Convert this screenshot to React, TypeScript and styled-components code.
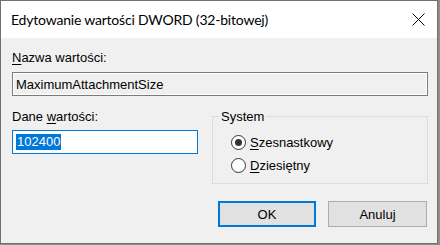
import styled, { createGlobalStyle } from "styled-components";

const GlobalStyle = createGlobalStyle`
  html, body {
    margin: 0;
    background: #8e8e8e;
  }
`;

const Window = styled.div`
  width: 438px;
  height: 244px;
  box-sizing: border-box;
  border: 1px solid #707070;
  background: #f0f0f0;
  display: flex;
  flex-direction: column;
  font-family: "Liberation Sans", Arial, sans-serif;
  font-size: 13px;
  color: #000;
`;

const TitleBar = styled.div`
  height: 37px;
  flex: none;
  display: flex;
  align-items: center;
  justify-content: space-between;
  background: #fff;
  padding-left: 10px;
`;

const Title = styled.span`
  font-family: Lato, "Noto Sans", sans-serif;
  font-size: 14px;
  letter-spacing: -0.2px;
  line-height: 20px;
  color: #000;
`;

const CloseButton = styled.div`
  width: 38px;
  height: 37px;
  display: grid;
  place-items: center;
`;

const Body = styled.div`
  flex: 1;
  padding: 12px 9px 16px 11px;
  display: flex;
  flex-direction: column;
`;

const Label = styled.div`
  line-height: 15px;
  height: 15px;
  white-space: nowrap;
`;

const Key = styled.span`
  text-decoration: underline;
  text-underline-offset: 2px;
`;

const Edit = styled.div<{ $readOnly?: boolean }>`
  height: 24px;
  box-sizing: border-box;
  display: flex;
  align-items: center;
  padding-left: 3px;
  margin-top: ${({ $readOnly }) => ($readOnly ? "7px" : "6px")};
  border: 1px solid ${({ $readOnly }) => ($readOnly ? "#7a7a7a" : "#0078d7")};
  background: ${({ $readOnly }) => ($readOnly ? "#f0f0f0" : "#fff")};
  box-shadow: ${({ $readOnly }) => ($readOnly ? "inset 0 0 0 1px #fff" : "none")};
  white-space: nowrap;
`;

const Selected = styled.span`
  background: #0078d7;
  color: #fff;
  padding: 0 1px;
  line-height: 16px;
`;

const DataRow = styled.div`
  margin-top: 13px;
  display: flex;
  align-items: flex-start;
  gap: 14px;
`;

const DataColumn = styled.div`
  width: 186px;
  display: flex;
  flex-direction: column;
`;

const Group = styled.fieldset`
  width: 216px;
  min-width: 0;
  box-sizing: border-box;
  margin: 0;
  padding: 7px 6px 6px 6px;
  border: 1px solid #dcdcdc;
`;

const Legend = styled.legend`
  padding: 0 2px;
  line-height: 15px;
`;

const RadioList = styled.div`
  padding-left: 12px;
  display: flex;
  flex-direction: column;
`;

const RadioRow = styled.div`
  height: 23px;
  display: flex;
  align-items: center;
  gap: 4px;
`;

const RadioCircle = styled.span<{ $checked?: boolean }>`
  width: 15px;
  height: 15px;
  box-sizing: border-box;
  border: 1px solid #333;
  border-radius: 50%;
  background: #fff;
  display: grid;
  place-items: center;

  &::after {
    content: "";
    width: 7px;
    height: 7px;
    border-radius: 50%;
    background: ${({ $checked }) => ($checked ? "#333" : "transparent")};
  }
`;

const ButtonRow = styled.div`
  margin-top: 17px;
  padding-right: 1px;
  display: flex;
  justify-content: flex-end;
  gap: 12px;
`;

const Button = styled.div<{ $default?: boolean; $width: number }>`
  width: ${({ $width }) => $width}px;
  height: 26px;
  box-sizing: border-box;
  display: grid;
  place-items: center;
  background: #e1e1e1;
  border: ${({ $default }) => ($default ? "2px solid #0078d7" : "1px solid #adadad")};
`;

export default function App() {
  return (
    <>
      <GlobalStyle />
      <Window>
        <TitleBar>
          <Title>Edytowanie wartości DWORD (32-bitowej)</Title>
          <CloseButton>
            <svg width="13" height="13" viewBox="0 0 13 13">
              <path d="M0.5 0.5 L12.5 12.5 M12.5 0.5 L0.5 12.5" stroke="#000" strokeWidth="1" fill="none" />
            </svg>
          </CloseButton>
        </TitleBar>
        <Body>
          <Label>
            <Key>N</Key>azwa wartości:
          </Label>
          <Edit $readOnly>MaximumAttachmentSize</Edit>
          <DataRow>
            <DataColumn>
              <Label>
                Dane <Key>w</Key>artości:
              </Label>
              <Edit>
                <Selected>102400</Selected>
              </Edit>
            </DataColumn>
            <Group>
              <Legend>System</Legend>
              <RadioList>
                <RadioRow>
                  <RadioCircle $checked />
                  <span>
                    <Key>S</Key>zesnastkowy
                  </span>
                </RadioRow>
                <RadioRow>
                  <RadioCircle />
                  <span>
                    <Key>D</Key>ziesiętny
                  </span>
                </RadioRow>
              </RadioList>
            </Group>
          </DataRow>
          <ButtonRow>
            <Button $default $width={98}>OK</Button>
            <Button $width={99}>Anuluj</Button>
          </ButtonRow>
        </Body>
      </Window>
    </>
  );
}
